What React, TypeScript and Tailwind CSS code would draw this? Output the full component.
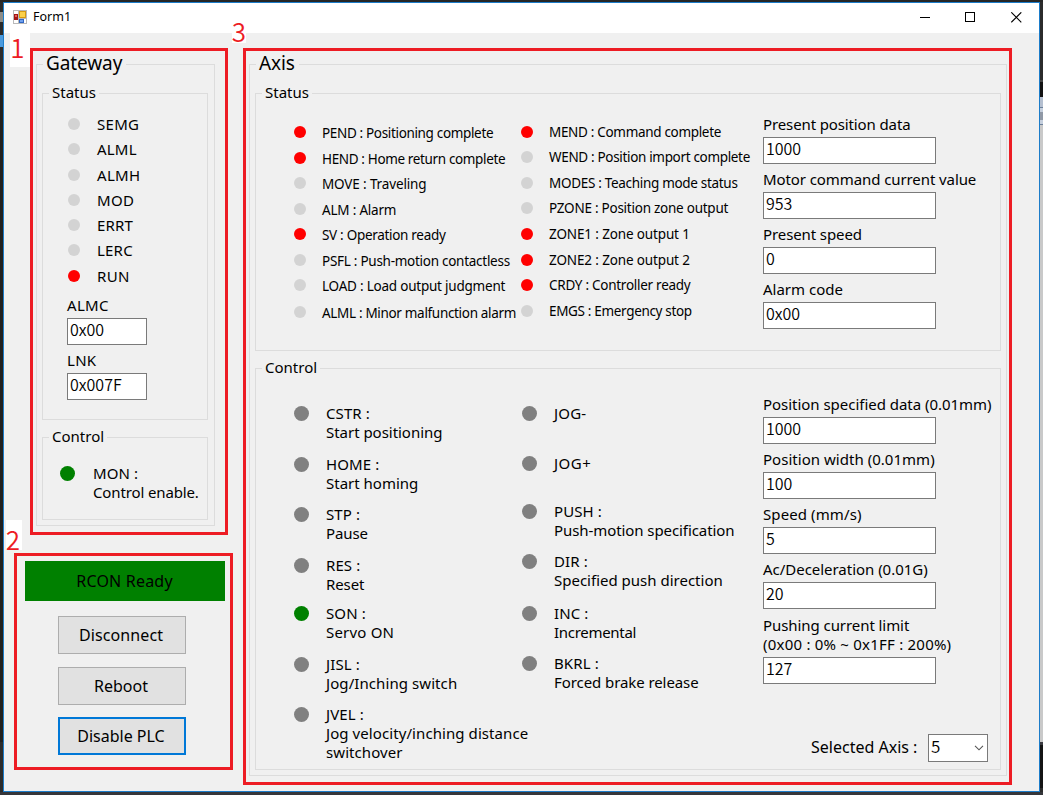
import React from 'react';

type Tone = 'red' | 'green' | 'light' | 'gray';

const tones: Record<Tone, string> = {
  red: 'bg-[#ff0000]',
  green: 'bg-[#008000]',
  light: 'bg-[#d3d3d3]',
  gray: 'bg-[#808080]',
};

type StatusItem = { label: string; on?: boolean; h: string; track?: string };
type ControlItem = { lines: string[]; on?: boolean; h: string; track?: string };

const gatewayStatus: StatusItem[] = [
  { label: 'SEMG', h: 'h-[25px]', track: 'tracking-[0.3px]' },
  { label: 'ALML', h: 'h-[26px]', track: 'tracking-[0.2px]' },
  { label: 'ALMH', h: 'h-[25px]', track: 'tracking-[0.3px]' },
  { label: 'MOD', h: 'h-[25px]', track: 'tracking-[0.4px]' },
  { label: 'ERRT', h: 'h-[25px]', track: 'tracking-[0.2px]' },
  { label: 'LERC', h: 'h-[26px]', track: 'tracking-[0.2px]' },
  { label: 'RUN', h: 'h-[25px]', on: true, track: 'tracking-[0.4px]' },
];

const axisStatusA: StatusItem[] = [
  { label: 'PEND : Positioning complete', on: true, h: 'h-[26px]', track: 'tracking-[-0.34px]' },
  { label: 'HEND : Home return complete', on: true, h: 'h-[25px]', track: 'tracking-[-0.36px]' },
  { label: 'MOVE : Traveling', h: 'h-[26px]', track: 'tracking-[-0.14px]' },
  { label: 'ALM : Alarm', h: 'h-[25px]', track: 'tracking-[-0.2px]' },
  { label: 'SV : Operation ready', on: true, h: 'h-[26px]', track: 'tracking-[-0.3px]' },
  { label: 'PSFL : Push-motion contactless', h: 'h-[25px]', track: 'tracking-[-0.27px]' },
  { label: 'LOAD : Load output judgment', h: 'h-[27px]', track: 'tracking-[-0.22px]' },
  { label: 'ALML : Minor malfunction alarm', h: 'h-[25px]', track: 'tracking-[-0.32px]' },
];

const axisStatusB: StatusItem[] = [
  { label: 'MEND : Command complete', on: true, h: 'h-[25px]', track: 'tracking-[-0.32px]' },
  { label: 'WEND : Position import complete', h: 'h-[26px]', track: 'tracking-[-0.33px]' },
  { label: 'MODES : Teaching mode status', h: 'h-[25px]', track: 'tracking-[-0.31px]' },
  { label: 'PZONE : Position zone output', h: 'h-[26px]', track: 'tracking-[-0.25px]' },
  { label: 'ZONE1 : Zone output 1', on: true, h: 'h-[26px]', track: 'tracking-[-0.14px]' },
  { label: 'ZONE2 : Zone output 2', on: true, h: 'h-[25px]', track: 'tracking-[-0.14px]' },
  { label: 'CRDY : Controller ready', on: true, h: 'h-[26px]', track: 'tracking-[-0.27px]' },
  { label: 'EMGS : Emergency stop', h: 'h-[25px]', track: 'tracking-[-0.33px]' },
];

const axisControlA: ControlItem[] = [
  { lines: ['CSTR :', 'Start positioning'], h: 'h-[51px]', track: 'tracking-[-0.03px]' },
  { lines: ['HOME :', 'Start homing'], h: 'h-[50px]' },
  { lines: ['STP :', 'Pause'], h: 'h-[51px]', track: 'tracking-[-0.1px]' },
  { lines: ['RES :', 'Reset'], h: 'h-[48px]', track: 'tracking-[-0.1px]' },
  { lines: ['SON :', 'Servo ON'], on: true, h: 'h-[51px]', track: 'tracking-[0.2px]' },
  { lines: ['JISL :', 'Jog/Inching switch'], h: 'h-[50px]', track: 'tracking-[0.08px]' },
  { lines: ['JVEL :', 'Jog velocity/inching distance', 'switchover'], h: 'h-[50px]', track: 'tracking-[0.08px]' },
];

const axisControlB: ControlItem[] = [
  { lines: ['JOG-'], h: 'h-[50px]', track: 'tracking-[0.2px]' },
  { lines: ['JOG+'], h: 'h-[48px]', track: 'tracking-[0.5px]' },
  { lines: ['PUSH :', 'Push-motion specification'], h: 'h-[50px]', track: 'tracking-[-0.08px]' },
  { lines: ['DIR :', 'Specified push direction'], h: 'h-[52px]' },
  { lines: ['INC :', 'Incremental'], h: 'h-[50px]', track: 'tracking-[-0.3px]' },
  { lines: ['BKRL :', 'Forced brake release'], h: 'h-[50px]', track: 'tracking-[-0.08px]' },
];

function Group({ title, className, big, children }: { title: string; className: string; big?: boolean; children: React.ReactNode }) {
  return (
    <fieldset className={`border border-[#dcdcdc] ${className}`}>
      <legend className={big ? 'ml-[6px] h-[27px] pl-[3px] pr-[4px] text-[19px] leading-[25px] tracking-[-0.1px]' : 'ml-[6px] h-[21px] px-[3px] leading-[18px]'}>
        {title}
      </legend>
      {children}
    </fieldset>
  );
}

function StatusList({ items, textClass, gap = 'gap-4' }: { items: StatusItem[]; textClass: string; gap?: string }) {
  return (
    <ul>
      {items.map((it) => (
        <li key={it.label} className={`flex items-start whitespace-nowrap ${gap} ${it.h}`}>
          <span className={`size-3 shrink-0 rounded-full ${it.on ? tones.red : tones.light}`} />
          <span className={`leading-5 ${textClass} ${it.track ?? ''}`}>{it.label}</span>
        </li>
      ))}
    </ul>
  );
}

function ControlList({ items, gap = 'gap-[17px]' }: { items: ControlItem[]; gap?: string }) {
  return (
    <ul>
      {items.map((it) => (
        <li key={it.lines[0]} className={`flex items-start whitespace-nowrap ${gap} ${it.h}`}>
          <span className={`size-[15px] shrink-0 rounded-full ${it.on ? tones.green : tones.gray}`} />
          <div className={`-mt-[2px] leading-[19px] ${it.track ?? ''}`}>
            {it.lines.map((line, i) => (
              <div key={line} className={i === 0 && it.lines.length > 1 ? 'tracking-[0.1px]' : ''}>{line}</div>
            ))}
          </div>
        </li>
      ))}
    </ul>
  );
}

function Field({ label, value, width = 'w-[173px]', track = '' }: { label: string[]; value: string; width?: string; track?: string }) {
  return (
    <div className="flex flex-col gap-[3px] whitespace-nowrap">
      <div className={track}>
        {label.map((l, i) => (
          <div key={l} className={label.length > 1 ? (i > 0 ? 'leading-[19px] tracking-[0.22px]' : 'leading-[19px]') : 'leading-5'}>{l}</div>
        ))}
      </div>
      <div className={`h-[27px] border border-[#7a7a7a] bg-white pl-[2px] font-['Noto_Sans_CJK_TC',sans-serif] text-[16px] font-[350] leading-[20px] ${width}`}>{value}</div>
    </div>
  );
}

function AppIcon() {
  return (
    <svg width="14" height="14" viewBox="0 0 14 14" shapeRendering="crispEdges">
      <rect width="14" height="14" fill="#b9b9b9" />
      <rect x="1" y="1" width="4" height="3" fill="#fff" />
      <rect x="1" y="10" width="4" height="3" fill="#fff" />
      <rect x="11" y="9" width="2" height="4" fill="#fff" />
      <rect x="1" y="4" width="4" height="6" fill="#a31515" />
      <rect x="2" y="5" width="2" height="2" fill="#e0605a" />
      <rect x="6" y="1" width="7" height="7" fill="#d89a10" />
      <rect x="7" y="2" width="5" height="5" fill="#fbd04a" />
      <rect x="6" y="9" width="5" height="4" fill="#2f66c4" />
      <rect x="7" y="10" width="3" height="2" fill="#6ea0ee" />
    </svg>
  );
}

function TitleBar() {
  return (
    <header className="flex h-[30px] items-center bg-white pl-[9px] pr-[17px]">
      <div className="-mt-[2px]">
        <AppIcon />
      </div>
      <span className="-mt-[2px] ml-[6px] text-[12.5px] leading-5">Form1</span>
      <div className="-mt-[2px] ml-auto flex">
        <svg className="mr-[34px]" width="11" height="11" viewBox="0 0 11 11" shapeRendering="crispEdges"><path d="M0 5.5h10" stroke="#000" /></svg>
        <svg className="mr-[35px]" width="11" height="11" viewBox="0 0 11 11" shapeRendering="crispEdges"><path d="M.5 .5h9v9h-9z" stroke="#000" fill="none" /></svg>
        <svg width="11" height="11" viewBox="0 0 11 11"><path d="M.3 .3l10 10M10.3 .3l-10 10" stroke="#000" strokeWidth="1.1" /></svg>
      </div>
    </header>
  );
}

function Callout({ n, className }: { n: string; className: string }) {
  return (
    <span className={`absolute flex items-center justify-center bg-white font-['Noto_Sans_CJK_TC',sans-serif] text-[26px] font-[350] leading-none text-[#ed1c24] ${className}`}>
      {n}
    </span>
  );
}

export default function App() {
  return (
    <div className="relative flex h-[795px] w-[1043px] flex-col overflow-hidden bg-[#35363a] font-['Noto_Sans',sans-serif] text-[15px] text-black">
      <div className="h-[2px] bg-[#262626]" />
      <div className="flex h-[790px]">
        <div className="flex w-[3px] flex-col bg-[#2b2b2b]">
          <div className="mt-[10px] h-[10px] bg-[#8c8c88]" />
          <div className="mt-[13px] h-[12px] bg-[#4a9ade]" />
          <div className="mt-[33px] h-[662px] bg-[#1f1f1f]" />
        </div>

        <div className="flex w-[1037px] flex-col border border-[#1c7cc9] bg-[#f0f0f0]">
          <TitleBar />
          <main className="flex pt-[15px]">
            <div className="w-[239px]">
              <section className="ml-[26px] h-[487px] w-[198px] border-[3px] border-[#ed1c24] pl-[3px]">
                <Group title="Gateway" big className="h-[475px] w-[179px]">
                  <div className="pl-[5px] pt-[5px]">
                    <Group title="Status" className="h-[337px] w-[166px]">
                      <div className="pl-[24px] pt-[14px]">
                        <div className="pl-px">
                          <StatusList items={gatewayStatus} textClass="-mt-1" gap="gap-[17px]" />
                        </div>
                        <div className="flex flex-col gap-[5px]">
                          <Field label={['ALMC']} value="0x00" width="w-[80px]" track="tracking-[0.3px]" />
                          <Field label={['LNK']} value="0x007F" width="w-[80px]" track="tracking-[0.3px]" />
                        </div>
                      </div>
                    </Group>
                    <Group title="Control" className="mt-[7px] h-[93px] w-[166px]">
                      <div className="pl-[17px] pt-[18px]">
                        <ControlList gap="gap-[18px]" items={[{ lines: ['MON :', 'Control enable.'], on: true, h: 'h-[50px]', track: 'tracking-[-0.13px]' }]} />
                      </div>
                    </Group>
                  </div>
                </Group>
              </section>

              <section className="ml-[10px] mt-[18px] flex h-[217px] w-[219px] flex-col items-start border-[3px] border-[#ed1c24] pl-[8px] pt-[5px] text-[16px]">
                <div className="flex h-[40px] w-[200px] items-center justify-center bg-[#008000] pr-px tracking-[0.2px]">RCON Ready</div>
                <button className="ml-[33px] mt-[15px] h-[38px] w-[128px] border border-[#adadad] bg-[#e1e1e1] pr-[2px] tracking-[0.1px]">Disconnect</button>
                <button className="ml-[33px] mt-[13px] h-[38px] w-[128px] border border-[#adadad] bg-[#e1e1e1] pr-[2px]">Reboot</button>
                <button className="ml-[33px] mt-[12px] h-[38px] w-[128px] border-2 border-[#0078d7] bg-[#e1e1e1] pr-[2px]">Disable PLC</button>
              </section>
            </div>

            <section className="h-[737px] w-[769px] border-[3px] border-[#ed1c24] pl-[3px]">
              <Group title="Axis" big className="h-[725px] w-[758px]">
                <div className="pl-[5px] pt-[5px]">
                  <Group title="Status" className="h-[268px] w-[746px]">
                    <div className="grid grid-cols-[227px_242px_236px] pl-[38px]">
                      <div className="pt-[22px] text-[13.5px]"><StatusList items={axisStatusA} textClass="-mt-[3px]" /></div>
                      <div className="pt-[22px] text-[13.5px]"><StatusList items={axisStatusB} textClass="-mt-1" /></div>
                      <div className="flex flex-col gap-[5px] pt-[10px]">
                        <Field label={['Present position data']} value="1000" track="tracking-[-0.12px]" />
                        <Field label={['Motor command current value']} value="953" track="tracking-[-0.09px]" />
                        <Field label={['Present speed']} value="0" track="tracking-[-0.1px]" />
                        <Field label={['Alarm code']} value="0x00" />
                      </div>
                    </div>
                  </Group>
                  <Group title="Control" className="mt-[7px] h-[412px] w-[746px]">
                    <div className="grid grid-cols-[228px_241px_236px] pl-[38px]">
                      <div className="pt-[27px]"><ControlList items={axisControlA} /></div>
                      <div className="pt-[27px]"><ControlList items={axisControlB} /></div>
                      <div className="flex flex-col gap-[5px] pt-[15px]">
                        <Field label={['Position specified data (0.01mm)']} value="1000" track="tracking-[-0.03px]" />
                        <Field label={['Position width (0.01mm)']} value="100" track="tracking-[0.03px]" />
                        <Field label={['Speed (mm/s)']} value="5" track="tracking-[0.1px]" />
                        <Field label={['Ac/Deceleration (0.01G)']} value="20" track="tracking-[-0.03px]" />
                        <div className="pt-[2px]">
                          <Field label={['Pushing current limit', '(0x00 : 0% ~ 0x1FF : 200%)']} value="127" track="tracking-[-0.07px]" />
                        </div>
                        <div className="ml-[48px] mt-[45px] flex items-center gap-[9px] whitespace-nowrap">
                          <span className="-mt-[2px] w-[108px] text-[16px] leading-5">Selected Axis :</span>
                          <div className="flex h-[28px] w-[60px] items-center justify-between border border-[#7a7a7a] bg-white pl-[2px] pr-[3px]">
                            <span className="-mt-[4px] font-['Noto_Sans_CJK_TC',sans-serif] text-[17px] font-[350] leading-[22px]">5</span>
                            <svg width="10" height="6" viewBox="0 0 10 6"><path d="M1 .8l4 4 4-4" fill="none" stroke="#555" strokeWidth="1.1" /></svg>
                          </div>
                        </div>
                      </div>
                    </div>
                  </Group>
                </div>
              </Group>
            </section>
          </main>
        </div>

        <div className="flex w-[3px] flex-col bg-[#2b2b2b]">
          <div className="mt-[78px] h-[2px] bg-[#444]" />
          <div className="h-[15px] bg-[#121212]" />
          <div className="h-[10px] bg-[#b4bfd0]" />
          <div className="h-px bg-[#6b7f99]" />
          <div className="h-[4px] bg-[#c5cfdd]" />
          <div className="h-[8px] bg-[#9099a6]" />
          <div className="h-[4px] bg-[#c5cfdd]" />
          <div className="h-px bg-[#6b7f99]" />
          <div className="h-[617px] bg-[#c9c9c9]" />
          <div className="h-[3px] bg-[#3a3a40]" />
          <div className="h-[43px] bg-[#141414]" />
        </div>
      </div>

      <Callout n="1" className="left-[10px] top-[33px] h-[34px] w-[20px] pb-[7px] pr-[5px]" />
      <Callout n="2" className="left-[6px] top-[520px] h-[30px] w-[16px] pr-[2px] pt-[7px]" />
      <Callout n="3" className="left-[232px] top-[24px] h-[19px] w-[14px] pb-[5px]" />
    </div>
  );
}
